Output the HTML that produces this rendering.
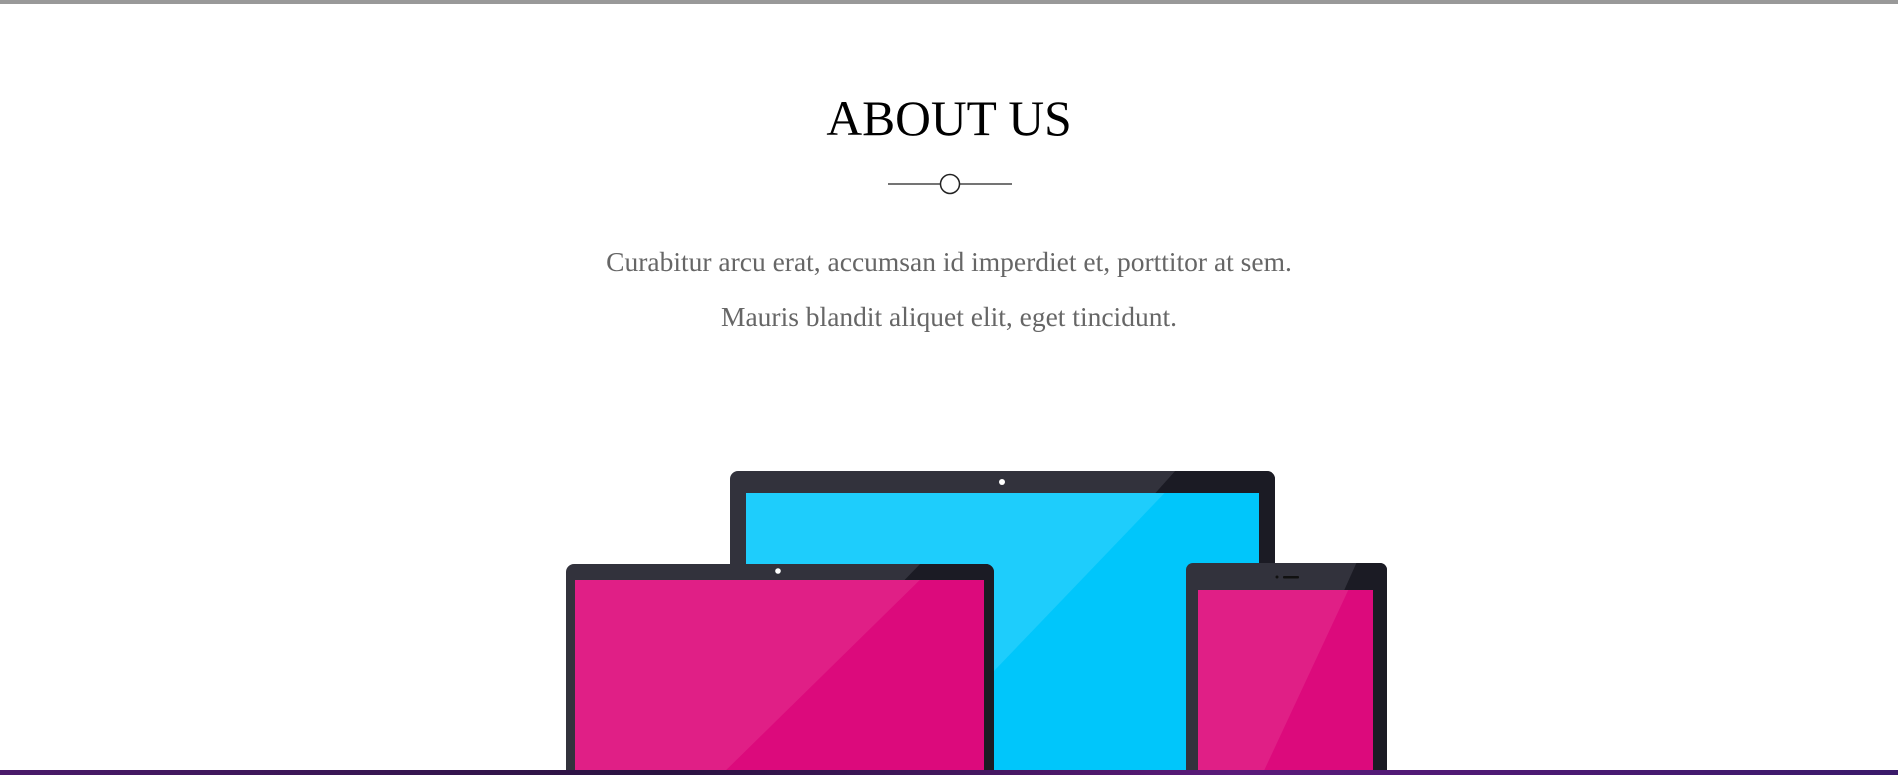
<!DOCTYPE html>
<html><head><meta charset="utf-8"><style>
html,body{margin:0;padding:0;background:#fff;width:1898px;height:775px;overflow:hidden;position:relative}
.top{position:absolute;left:0;top:0;width:1898px;height:4px;background:#999}
h1{position:absolute;left:0;width:1898px;top:89px;margin:0;text-align:center;font:normal 49.5px/60px "Liberation Serif",serif;color:#000}
p{position:absolute;left:0;width:1898px;margin:0;text-align:center;font:27.5px/30px "Liberation Serif",serif;color:#666}
svg{position:absolute;left:0;top:0;display:block}
</style></head><body>
<div class="top"></div>
<h1>ABOUT US</h1>
<p style="top:247px">Curabitur arcu erat, accumsan id imperdiet et, porttitor at sem.</p>
<p style="top:302px">Mauris blandit aliquet elit, eget tincidunt.</p>
<svg width="1898" height="775" viewBox="0 0 1898 775">
<defs>
<clipPath id="mon"><rect x="730" y="471" width="545" height="400" rx="8"/></clipPath>
<clipPath id="monS"><rect x="746" y="493" width="513" height="300"/></clipPath>
<clipPath id="lap"><rect x="566" y="564" width="428" height="300" rx="8"/></clipPath>
<clipPath id="lapS"><rect x="575" y="580" width="409" height="200"/></clipPath>
<clipPath id="tab"><rect x="1186" y="563" width="201" height="300" rx="7"/></clipPath>
<clipPath id="tabS"><rect x="1198" y="590" width="175" height="200"/></clipPath>
<linearGradient id="bs" x1="0" x2="1"><stop offset="0" stop-color="#4a1a6a"/><stop offset="0.35" stop-color="#2a1240"/><stop offset="0.65" stop-color="#5a1a7a"/><stop offset="1" stop-color="#3a1a6a"/></linearGradient>
</defs>
<line x1="888" y1="184" x2="1012" y2="184" stroke="#222" stroke-width="1.3"/>
<circle cx="950" cy="184" r="9.5" fill="#fff" stroke="#222" stroke-width="1.5"/>
<rect x="730" y="471" width="545" height="400" rx="8" fill="#32323c"/>
<polygon clip-path="url(#mon)" points="1185,460 1300,460 1300,800 880,800" fill="#1b1b24"/>
<rect x="746" y="493" width="513" height="300" fill="#00c6fb"/>
<polygon clip-path="url(#monS)" points="700,480 1177,480 880,790 700,790" fill="#1ecdfc"/>
<circle cx="1002" cy="482" r="3" fill="#fff"/>
<rect x="566" y="564" width="428" height="300" rx="8" fill="#32323c"/>
<polygon clip-path="url(#lap)" points="924,560 1000,560 1000,800 720,800 720,770" fill="#1b1b24"/>
<rect x="575" y="580" width="409" height="200" fill="#dc0a7c"/>
<polygon clip-path="url(#lapS)" points="560,570 930,570 714,782 560,782" fill="#e01f86"/>
<circle cx="778" cy="571" r="2.8" fill="#fff"/>
<rect x="1186" y="563" width="201" height="300" rx="7" fill="#32323c"/>
<polygon clip-path="url(#tab)" points="1360,555 1400,555 1400,800 1250,800" fill="#1b1b24"/>
<rect x="1198" y="590" width="175" height="200" fill="#dc0a7c"/>
<polygon clip-path="url(#tabS)" points="1190,580 1353,580 1255,790 1190,790" fill="#e01f86"/>
<circle cx="1277" cy="577" r="1.5" fill="#111"/>
<rect x="1283" y="576" width="16" height="2.5" rx="1" fill="#111"/>
<rect x="0" y="770" width="1898" height="5" fill="url(#bs)"/>
</svg>
</body></html>
